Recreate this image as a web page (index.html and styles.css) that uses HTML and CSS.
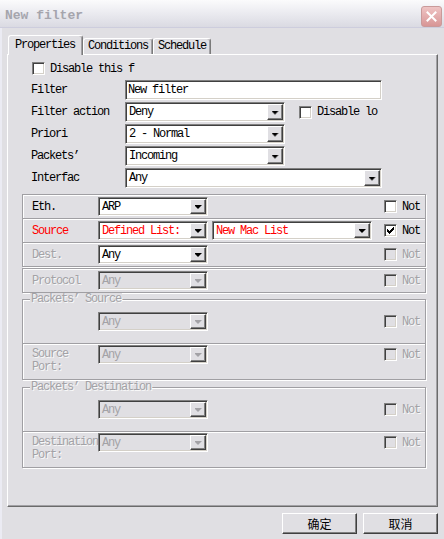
FILE: index.html
```html
<!DOCTYPE html>
<html lang="en">
    <head>
        <title>New filter</title>
        <meta charset="utf-8" />
        <link rel="stylesheet" href="styles.css">
    </head>
    <body>
        <div class="win">
            <div class="titlebar">
                <span class="title">New filter</span>
                <span class="close">
                    <svg width="11" height="11" viewBox="0 0 11 11">
                        <path d="M1.5 1.5 L9.5 9.5 M9.5 1.5 L1.5 9.5" stroke="#fff" stroke-width="2" stroke-linecap="square" fill="none" />
                    </svg>
                </span>
            </div>
            <div class="client">
                <div class="tabs">
                    <div class="tab active">Properties</div>
                    <div class="tab">Conditions</div>
                    <div class="tab">Schedule</div>
                </div>
                <div class="panel">
                    <div class="chk-line"><span class="chk"></span>Disable this f</div>
                    <div class="form">
                        <div class="frow">
                            <span class="flabel">Filter</span>
                            <span class="edit w257">New filter</span>
                        </div>
                        <div class="frow">
                            <span class="flabel">Filter action</span>
                            <span class="combo w160"><span class="val">Deny</span><span class="drop"></span></span>
                            <span class="chk side"></span><span class="side-text">Disable lo</span>
                        </div>
                        <div class="frow">
                            <span class="flabel">Priori</span>
                            <span class="combo w160"><span class="val">2 - Normal</span><span class="drop"></span></span>
                        </div>
                        <div class="frow">
                            <span class="flabel">Packets’</span>
                            <span class="combo w160"><span class="val">Incoming</span><span class="drop"></span></span>
                        </div>
                        <div class="frow">
                            <span class="flabel">Interfac</span>
                            <span class="combo w257"><span class="val">Any</span><span class="drop"></span></span>
                        </div>
                    </div>

                    <div class="grp grp-first">
                        <div class="row">
                            <span class="rlabel">Eth.</span>
                            <span class="combo small"><span class="val">ARP</span><span class="drop"></span></span>
                            <span class="not"><span class="chk"></span>Not</span>
                        </div>
                        <div class="row">
                            <span class="rlabel red">Source</span>
                            <span class="combo small"><span class="val red">Defined List:</span><span class="drop"></span></span>
                            <span class="combo small wide"><span class="val red">New Mac List</span><span class="drop"></span></span>
                            <span class="not"><span class="chk on"></span>Not</span>
                        </div>
                        <div class="row">
                            <span class="rlabel dis">Dest.</span>
                            <span class="combo small"><span class="val">Any</span><span class="drop"></span></span>
                            <span class="not dis"><span class="chk off"></span>Not</span>
                        </div>
                    </div>

                    <div class="grp grp-proto">
                        <div class="row">
                            <span class="rlabel dis">Protocol</span>
                            <span class="combo small off"><span class="val">Any</span><span class="drop"></span></span>
                            <span class="not dis"><span class="chk off"></span>Not</span>
                        </div>
                    </div>

                    <div class="grp grp-src">
                        <div class="grp-title dis">Packets’ Source</div>
                        <div class="row tall">
                            <span class="rlabel"></span>
                            <span class="combo small off"><span class="val">Any</span><span class="drop"></span></span>
                            <span class="not dis"><span class="chk off"></span>Not</span>
                        </div>
                        <div class="row port">
                            <span class="port-label dis">Source Port:</span>
                            <span class="combo small off"><span class="val">Any</span><span class="drop"></span></span>
                            <span class="not dis"><span class="chk off"></span>Not</span>
                        </div>
                    </div>

                    <div class="grp grp-dst">
                        <div class="grp-title dis">Packets’ Destination</div>
                        <div class="row tall">
                            <span class="rlabel"></span>
                            <span class="combo small off"><span class="val">Any</span><span class="drop"></span></span>
                            <span class="not dis"><span class="chk off"></span>Not</span>
                        </div>
                        <div class="row port">
                            <span class="port-label dis">Destination Port:</span>
                            <span class="combo small off"><span class="val">Any</span><span class="drop"></span></span>
                            <span class="not dis"><span class="chk off"></span>Not</span>
                        </div>
                    </div>
                </div>
                <div class="buttons">
                    <button type="button">确定</button>
                    <button type="button">取消</button>
                </div>
            </div>
        </div>
    </body>
</html>
```

FILE: styles.css
```css
html, body {
    margin: 0px;
    padding: 0px;
    background: #e0dfe3;
}
body {
    font-family: "Liberation Mono", monospace;
    font-size: 12px;
    line-height: 14px;
    letter-spacing: -1.2px;
    color: black;
}
.win {
    display: flex;
    flex-direction: column;
    width: 444px;
    height: 539px;
    overflow: hidden;
}

/* caption */
.titlebar {
    display: flex;
    align-items: center;
    box-sizing: border-box;
    height: 28px;
    padding: 5px 2px 0px 5px;
    border-bottom: 1px solid #cdcddd;
    background: linear-gradient(#fbfbfc, #ececf1 45%, #dadae2);
}
.title {
    flex: 1;
    font-size: 13px;
    font-weight: bold;
    letter-spacing: 0px;
    color: #a5a5ad;
}
.close {
    display: flex;
    align-items: center;
    justify-content: center;
    box-sizing: border-box;
    width: 21px;
    height: 21px;
    border: 1px solid #c99a9a;
    border-radius: 3px;
    background: linear-gradient(#efc4c4, #d89696);
}

.client {
    flex: 1;
    display: flex;
    flex-direction: column;
    min-height: 0;
    padding: 7px 6px 5px 5px;
    border-left: 2px solid #ebebf3;
}

/* tabs */
.tabs {
    display: flex;
    align-items: flex-end;
    height: 19px;
    padding-left: 1px;
}
.tab {
    box-sizing: border-box;
    height: 16px;
    padding: 0px 4px;
    border: 1px solid;
    border-bottom: 0;
    border-color: #fff #7a7a7a #fff #fff;
    border-radius: 3px 3px 0px 0px;
    box-shadow: inset -1px 0px 0px #a2a1a5;
    line-height: 15px;
}
.tab.active {
    position: relative;
    z-index: 1;
    height: 20px;
    margin-bottom: -1px;
    padding: 0px 7px 0px 6px;
    background: #e0dfe3;
    line-height: 18px;
}
.panel {
    flex: 1;
    border: 1px solid;
    border-color: #fff #6b6b6b #6b6b6b #fff;
    box-shadow: inset -1px -1px 0px #a2a1a5;
}

/* checkboxes */
.chk {
    display: flex;
    align-items: center;
    justify-content: center;
    box-sizing: border-box;
    width: 13px;
    height: 13px;
    border: 1px solid;
    border-color: #808080 #fff #fff #808080;
    box-shadow: inset 1px 1px 0px #404040, inset -1px -1px 0px #d4d0c8;
    background: white;
}
.chk.off {
    background: #e0dfe3;
}
.chk.on::after {
    content: "";
    width: 7px;
    height: 7px;
    background: black;
    clip-path: polygon(6px 0, 7px 0, 7px 3px, 6px 3px, 6px 4px, 5px 4px, 5px 5px, 4px 5px, 4px 6px, 3px 6px, 3px 7px, 2px 7px, 2px 6px, 1px 6px, 1px 5px, 0 5px, 0 2px, 1px 2px, 1px 3px, 2px 3px, 2px 4px, 3px 4px, 3px 3px, 4px 3px, 4px 2px, 5px 2px, 5px 1px, 6px 1px);
}
.chk-line {
    display: flex;
    align-items: center;
    gap: 5px;
    height: 13px;
    margin: 7px 0px 0px 24px;
}

/* top fields */
.form {
    display: flex;
    flex-direction: column;
    gap: 2px;
    margin-top: 5px;
    padding-left: 23px;
}
.frow {
    display: flex;
    align-items: center;
    height: 20px;
}
.flabel {
    width: 94px;
}
.w160 {
    width: 160px;
}
.w257 {
    width: 257px;
}
.side {
    margin-left: 14px;
}
.side-text {
    margin-left: 5px;
}
.edit, .combo {
    box-sizing: border-box;
    height: 20px;
    border: 1px solid;
    border-color: #808080 #fff #fff #808080;
    box-shadow: inset 1px 1px 0px #404040, inset -1px -1px 0px #d4d0c8;
    background: white;
}
.edit {
    padding-left: 2px;
    line-height: 18px;
}
.combo {
    display: flex;
    align-items: stretch;
}
.combo .val {
    flex: 1;
    display: flex;
    align-items: center;
    padding-left: 3px;
    overflow: hidden;
    white-space: nowrap;
}
.drop {
    display: flex;
    align-items: center;
    justify-content: center;
    box-sizing: border-box;
    width: 16px;
    margin: 1px;
    border: 1px solid;
    border-color: #fff #404040 #404040 #fff;
    box-shadow: inset -1px -1px 0px #808080;
    background: #e0dfe3;
}
.drop::after {
    content: "";
    width: 7px;
    height: 4px;
    margin-top: 1px;
    background: black;
    clip-path: polygon(0 0, 7px 0, 7px 1px, 6px 1px, 6px 2px, 5px 2px, 5px 3px, 4px 3px, 4px 4px, 3px 4px, 3px 3px, 2px 3px, 2px 2px, 1px 2px, 1px 1px, 0 1px);
}
.combo.small {
    width: 110px;
    height: 19px;
}
.combo.wide {
    width: 160px;
    margin-left: 4px;
}
.combo.off {
    background: #e0dfe3;
}
.combo.off .val {
    color: #a3a2a6;
}
.combo.off .drop::after {
    background: #a3a2a6;
}

/* condition groups */
.grp {
    display: flex;
    flex-direction: column;
    margin: 0px 11px 0px 14px;
    border: 1px solid #a09fa3;
    box-shadow: 1px 1px 0px #fff, inset 1px 1px 0px #fff;
}
.grp-first {
    margin-top: 6px;
}
.grp-proto {
    margin-top: 1px;
}
.grp-src {
    margin-top: 6px;
}
.grp-dst {
    margin-top: 7px;
}
.grp-title {
    align-self: flex-start;
    height: 12px;
    margin: -7px 0px -5px 7px;
    padding: 0px 1px;
    background: #e0dfe3;
    line-height: 12px;
}
.row {
    display: flex;
    align-items: center;
    height: 23px;
    padding: 0px 5px 0px 9px;
}
.row + .row {
    border-top: 1px solid #a09fa3;
    box-shadow: inset 0px 1px 0px #fff;
}
.row.tall {
    height: 43px;
}
.row.port {
    align-items: flex-start;
    height: 34px;
    padding-top: 1px;
}
.rlabel {
    width: 66px;
}
.port-label {
    width: 66px;
    padding-top: 3px;
    line-height: 13px;
}
.not {
    display: flex;
    align-items: center;
    gap: 5px;
    height: 19px;
    margin-left: auto;
}
.red {
    color: #f00;
}
.dis {
    color: #a3a2a6;
    text-shadow: 1px 1px 0px rgba(255, 255, 255, 0.8);
}

/* dialog buttons */
.buttons {
    display: flex;
    justify-content: flex-end;
    gap: 6px;
    margin-top: 6px;
}
button {
    width: 75px;
    height: 21px;
    padding: 0px;
    border: 1px solid;
    border-color: #fff #404040 #404040 #fff;
    box-shadow: inset -1px -1px 0px #808080;
    background: #e0dfe3;
    font-family: "Noto Sans CJK SC", sans-serif;
    font-size: 12px;
    letter-spacing: 0px;
    color: black;
}
```
